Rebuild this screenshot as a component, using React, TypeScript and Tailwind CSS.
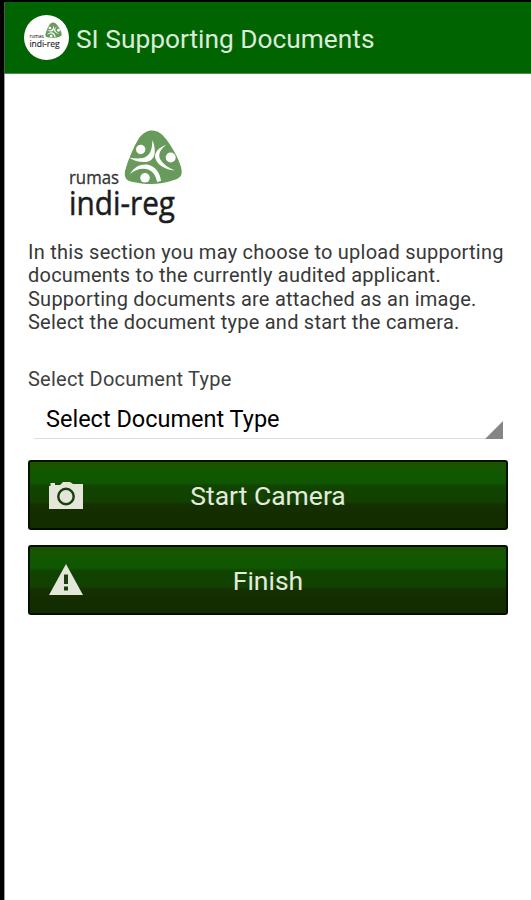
import type { ReactNode } from "react";

function Emblem() {
  return (
    <g>
      <path
        d="M88 5.5 C94 5.5 98 9 102 14 C108 22 114 32 117 42 C119 50 117 53 110 55 C97 60 82 60 69 57 C62 56 60 52 61 46 C64 35 69 23 75 13 C79 8 83 5.5 88 5.5 Z"
        fill="#689a5b"
      />
      <g fill="#fff">
        <circle cx="76.7" cy="24.5" r="4.7" />
        <circle cx="106.7" cy="32.5" r="5" />
        <circle cx="81" cy="52.8" r="4.8" />
        <path d="M88.5 15 C93 27 91 36 82 37 C76 37.5 70 36 65 32.5 C72 34 79 34 83 31 C88 27 88 21 88.5 15 Z" />
        <path d="M102 20 C96 25 94 29 96 34 C99 39 104 43 111 45.5 C101 45 92 39 91 32 C91 26 96 22 102 20 Z" />
        <path d="M66 49 C70 42 76 39 83 39.5 C91 41 96 47 97 56 L93 57 C92 50 88 45 82 44 C76 43 71 45 66 49 Z" />
      </g>
    </g>
  );
}

function Logo({ className }: { className: string }) {
  return (
    <svg viewBox="0 0 126 106" className={className}>
      <Emblem />
      <g fontFamily="'Open Sans', sans-serif">
        <text x="5" y="59" fontSize="18.5" textLength="50" lengthAdjust="spacingAndGlyphs" fill="#333" stroke="#333" strokeWidth="0.3">
          rumas
        </text>
        <text x="5" y="90" fontSize="32" textLength="106" lengthAdjust="spacingAndGlyphs" fill="#1c1c1c" stroke="#1c1c1c" strokeWidth="0.5">
          indi-reg
        </text>
      </g>
    </svg>
  );
}

function CameraIcon() {
  return (
    <svg viewBox="0 0 34 28" className="mt-0.5 h-7 w-[34px]">
      <path d="M0 4 H1.5 V1 H6 V3 H11 L14 0 H21 L24 2 H34 V27 H0 Z" fill="#e3e6d8" />
      <circle cx="17" cy="14.5" r="7.7" fill="none" stroke="#183f0b" strokeWidth="2.4" />
    </svg>
  );
}

function WarningIcon() {
  return (
    <svg viewBox="0 0 34 31" className="-mt-px h-[31px] w-[34px]">
      <path d="M17 0 L34 31 H0 Z" fill="#e3e6d8" />
      <path d="M15 10.5 H19 V20 H15 Z M15 22.5 H19 V26.5 H15 Z" fill="#183f0b" />
    </svg>
  );
}

function ActionButton({ icon, label }: { icon: ReactNode; label: string }) {
  return (
    <button className="flex h-[70px] w-full items-center rounded-[3px] border-2 border-[#021000] bg-[linear-gradient(#1d5200_0%,#125800_13%,#0e5700_32%,#114400_36%,#124000_60%,#142f00_65%,#132b00_100%)] pl-[19px] text-[#e4eadf]">
      <span className="w-[34px]">{icon}</span>
      <span className="flex-1 pt-1 pr-[53px] text-center text-[26.5px] leading-none">{label}</span>
    </button>
  );
}

export default function App() {
  return (
    <div className="flex h-[900px] w-[531px] flex-col overflow-hidden border-t-2 border-l-4 border-black bg-white font-['Roboto',sans-serif]">
      <header className="flex h-[72px] shrink-0 items-center border-b border-l border-b-[#4b914b] border-l-[#4d554d] bg-[#006400] pl-[19px]">
        <div className="flex size-[45px] items-center justify-center rounded-full bg-white">
          <Logo className="-mt-0.5 mr-0.5 w-9" />
        </div>
        <h1 className="ml-[7px] pt-[3px] text-[26.3px] leading-none whitespace-nowrap text-[#dcebd9]">
          SI Supporting Documents
        </h1>
      </header>

      <main className="grow border-l border-[#9c9c9c] pr-[23px] pl-[23px]">
        <Logo className="mt-[51px] ml-9 h-[106px] w-[126px]" />
        <p className="mt-[10px] text-[20px] leading-[23.3px] tracking-[0.24px] whitespace-nowrap text-[#383838]">
          In this section you may choose to upload supporting
          <br />
          documents to the currently audited applicant.
          <br />
          Supporting documents are attached as an image.
          <br />
          Select the document type and start the camera.
        </p>

        <div className="mt-[34px] text-[20px] leading-[23px] tracking-[0.24px] text-[#404040]">Select Document Type</div>
        <div className="mt-[11px] mr-[5px] ml-1.5 flex h-[37px] items-end justify-between border-b border-[#dedede] pl-3">
          <span className="pb-[5px] text-[23.5px] leading-[27px] text-black">Select Document Type</span>
          <svg viewBox="0 0 18 18" className="-mb-px size-[18px]">
            <path d="M18 0 V18 H0 Z" fill="#858585" />
          </svg>
        </div>

        <div className="mt-[20.5px] flex flex-col gap-[15px]">
          <ActionButton icon={<CameraIcon />} label="Start Camera" />
          <ActionButton icon={<WarningIcon />} label="Finish" />
        </div>
      </main>
    </div>
  );
}
